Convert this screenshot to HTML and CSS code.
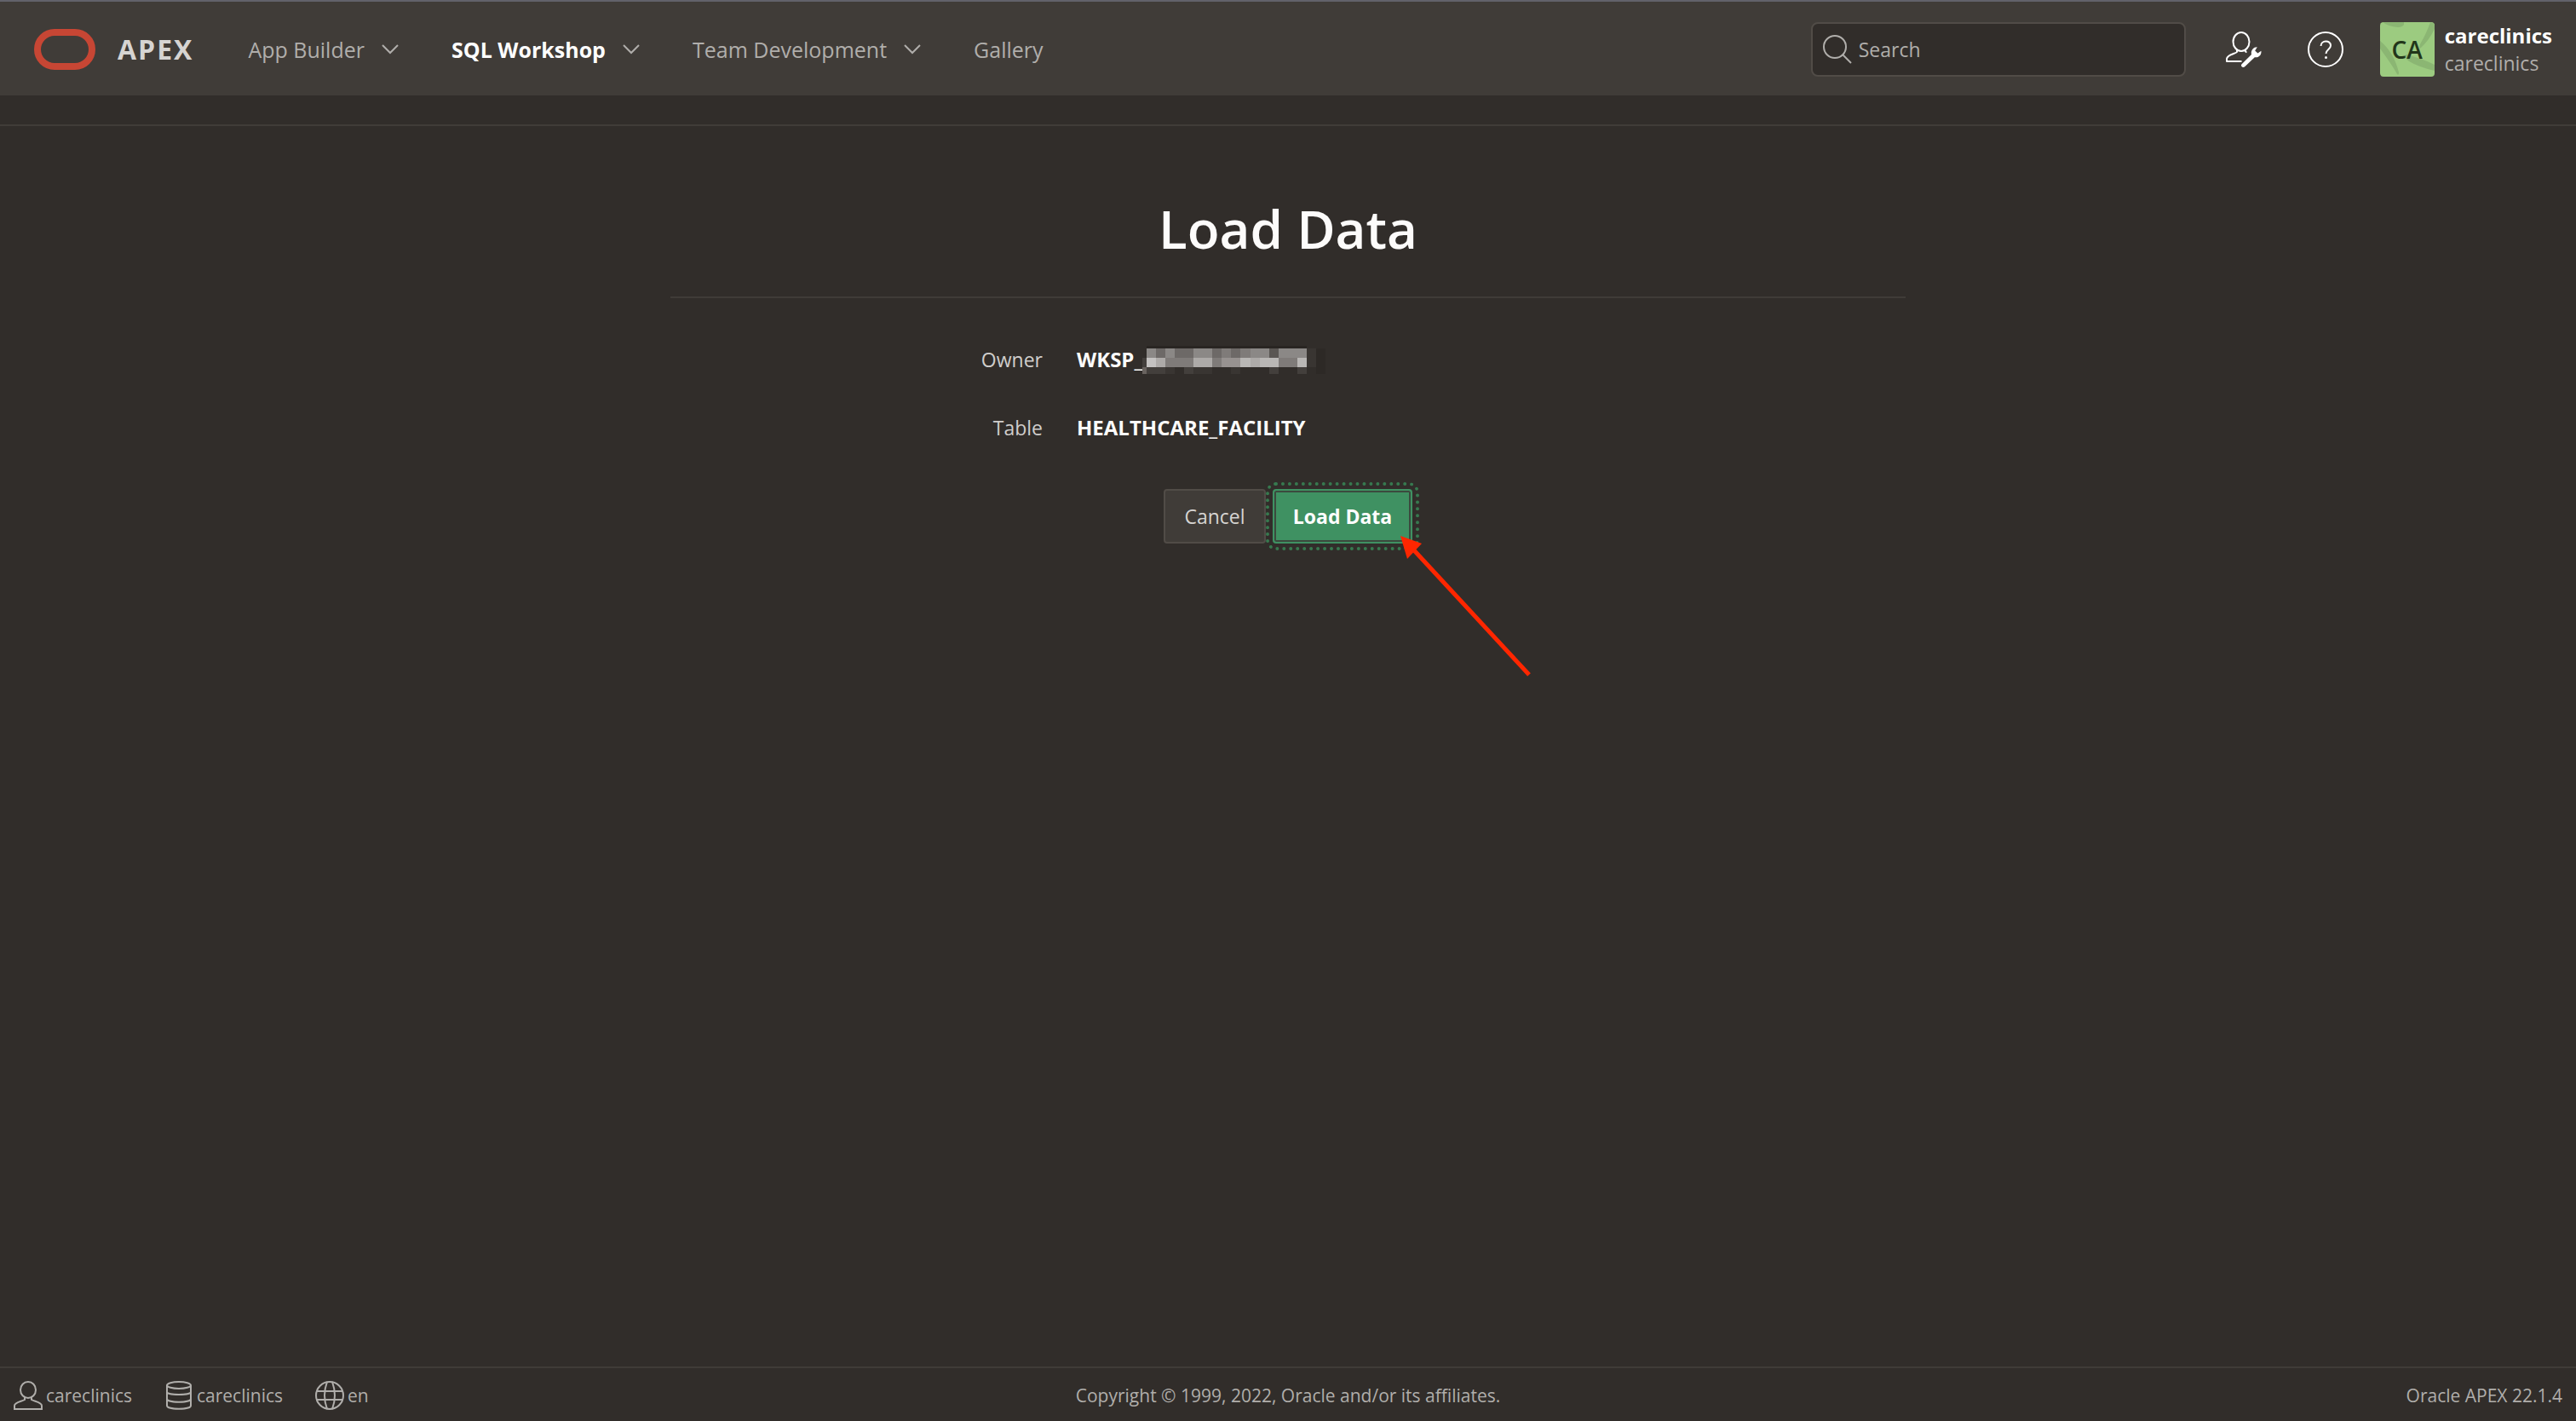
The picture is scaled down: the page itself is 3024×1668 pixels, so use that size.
FILE: index.html
```html
<!DOCTYPE html>
<html lang="en">
<head>
<meta charset="utf-8">
<meta name="viewport" content="width=device-width, initial-scale=1">
<title>Load Data</title>
<link rel="stylesheet" href="styles.css">
</head>
<body>
<header class="header">
  <a class="brand" href="#">
    <svg class="brand-logo" viewBox="0 0 72 48" aria-hidden="true"><rect x="4" y="4" width="64" height="40" rx="20" fill="none" stroke="#c74634" stroke-width="8"/></svg>
    <span class="brand-name">APEX</span>
  </a>
  <nav class="nav">
    <a class="nav-link" href="#">App Builder <svg class="chevron" viewBox="0 0 20 12" aria-hidden="true"><path d="M1 1l9 9 9-9"/></svg></a>
    <a class="nav-link nav-link-current" href="#">SQL Workshop <svg class="chevron" viewBox="0 0 20 12" aria-hidden="true"><path d="M1 1l9 9 9-9"/></svg></a>
    <a class="nav-link" href="#">Team Development <svg class="chevron" viewBox="0 0 20 12" aria-hidden="true"><path d="M1 1l9 9 9-9"/></svg></a>
    <a class="nav-link" href="#">Gallery</a>
  </nav>
  <div class="tools">
    <label class="search">
      <svg class="search-icon" viewBox="0 0 34 34" aria-hidden="true"><circle cx="14" cy="14" r="13"/><path d="M23 23l10 10"/></svg>
      <input class="search-input" type="search" placeholder="Search" aria-label="Search">
    </label>
    <button class="icon-button" type="button" aria-label="Administration">
      <svg class="tool-icon" viewBox="0 0 42 42" aria-hidden="true">
        <ellipse cx="18" cy="12" rx="9.500" ry="11"/>
        <path d="M13 21.500v2.500c-1.500 2-11.500 3-12 8v3h17.500"/>
        <path d="M23 21.500v2l1.500 1"/>
        <path class="wrench" d="M18.600 38.200L30 27c-1-4.500 2-9 6.800-8.800l-2.600 4.200 3.200 3 4-2.600c.8 5-3.400 8.400-7.600 7.400L22.200 41.200c-2.400 2-5.600-.6-3.600-3z"/>
      </svg>
    </button>
    <button class="icon-button" type="button" aria-label="Help">
      <svg class="tool-icon" viewBox="0 0 42 42" aria-hidden="true">
        <circle cx="21" cy="21" r="20"/>
        <path d="M15.500 17c0-7 11.500-7.500 11.500-.5 0 4.500-5.500 4.500-5.500 9.500"/>
        <circle class="dot" cx="21.500" cy="30.500" r="1.500"/>
      </svg>
    </button>
    <a class="account" href="#">
      <span class="avatar">
        <svg class="avatar-art" viewBox="0 0 64 64" aria-hidden="true"><path d="M3 0h25v3q-2 3-7 3Q9 5 3 0z"/><path d="M59 0l5 2v6q-7 14-17 23-2-2 1-7 6-10 11-24z"/><path d="M0 22q16 13 22 37 0 4-2 2Q14 50 0 31z"/><path d="M30 38q18 4 34 12v7q-18-4-30-11-6-5-4-8z"/></svg>
        <span class="avatar-initials">CA</span>
      </span>
      <span class="account-names"><strong class="account-user">careclinics</strong><span class="account-space">careclinics</span></span>
    </a>
  </div>
</header>
<div class="breadcrumb-bar"></div>
<main class="main">
  <section class="wizard">
    <h1 class="title">Load Data</h1>
    <dl class="details">
      <dt>Owner</dt>
      <dd>WKSP_<svg class="redacted" viewBox="0 0 216 34" shape-rendering="crispEdges" aria-label="hidden">
        <path fill="#292522" d="M5 0h188v3H5z"/>
        <path fill="#7f7b79" d="M5 3h188v22H5z"/>
        <path fill="#6d6967" d="M16 3h11v11H16zM38 3h22v11H38zM82 3h11v11H82zM104 3h11v11h-11z"/>
        <path fill="#5a5653" d="M149 3h11v11h-11z"/>
        <path fill="#8b8886" d="M5 3h11v11H5zM27 3h11v11H27zM60 3h22v11H60zM127 3h22v11h-22zM160 3h33v11h-33z"/>
        <path fill="#c4c2c1" d="M5 14h11v11H5z"/>
        <path fill="#adaaa8" d="M16 14h11v11H16zM60 14h22v11H60zM127 14h11v11h-11z"/>
        <path fill="#b9b7b5" d="M115 14h12v11h-12zM138 14h22v11h-22zM182 14h11v11h-11z"/>
        <path fill="#979290" d="M93 14h22v11H93z"/>
        <path fill="#69635f" d="M0 25h5v8H0z"/>
        <path fill="#433f3c" d="M0 14h5v11H0zM5 25h22v8H5zM49 25h11v8H49zM149 25h11v8h-11zM182 25h11v8h-11z"/>
        <path fill="#393532" d="M27 25h11v8H27zM60 25h22v8H60zM104 25h11v8h-11zM193 3h11v22h-11z"/>
        <path fill="#2d2926" d="M204 3h11v30h-11z"/>
      </svg></dd>
      <dt>Table</dt>
      <dd>HEALTHCARE_FACILITY</dd>
    </dl>
    <div class="actions">
      <button class="button" type="button">Cancel</button>
      <span class="pointed">
        <button class="button button-primary" type="button">Load Data</button>
        <svg class="arrow" viewBox="0 0 156 168" aria-hidden="true"><path d="M16 17L151 163" stroke="#ff2600" stroke-width="5"/><path d="M0 0l25 9-17 18z" fill="#ff2600"/></svg>
      </span>
    </div>
  </section>
</main>
<footer class="footer">
  <ul class="status">
    <li class="status-item"><svg class="status-icon" viewBox="0 0 34 34" aria-hidden="true"><ellipse cx="17" cy="10.500" rx="9" ry="9.500"/><path d="M13 19v3C10 24 1 25 1 29v4h32v-4c0-4-9-5-12-7v-3"/></svg>careclinics</li>
    <li class="status-item"><svg class="status-icon" viewBox="0 0 34 34" aria-hidden="true"><ellipse cx="17" cy="5" rx="14" ry="4"/><path d="M3 5v24c0 5 28 5 28 0V5M3 13c0 4 28 4 28 0M3 21c0 5 28 5 28 0"/></svg>careclinics</li>
    <li class="status-item"><svg class="status-icon" viewBox="0 0 34 34" aria-hidden="true"><circle cx="17" cy="17" r="16"/><path d="M2 12h30M2 22h30M14 1Q8 17 14 33M20 1Q26 17 20 33"/></svg>en</li>
  </ul>
  <p class="copyright">Copyright © 1999, 2022, Oracle and/or its affiliates.</p>
  <p class="version">Oracle APEX 22.1.4</p>
</footer>
</body>
</html>
```
FILE: styles.css
```css
* { box-sizing: border-box; }

body {
  margin: 0;
  min-height: 100vh;
  display: flex;
  flex-direction: column;
  background: #312d2a;
  color: #d0cecc;
  font: 23px/32px "Open Sans", "Noto Sans", sans-serif;
}

a { color: inherit; text-decoration: none; }
button { font: inherit; }
svg { fill: none; flex: none; }

.header {
  display: flex;
  align-items: center;
  height: 112px;
  padding: 2px 28px 0 40px;
  border-top: 2px solid #62626a;
  background: #403c38;
}

.brand { display: flex; align-items: center; gap: 26px; margin-right: 64px; }
.brand-logo { width: 72px; height: 48px; }
.brand-name { font-size: 32px; font-weight: 700; letter-spacing: 2px; color: #d6d4d2; }

.nav { display: flex; gap: 62px; font-size: 25px; color: #b0aeab; }
.nav-link { display: flex; align-items: center; gap: 20px; }
.nav-link-current { color: #fff; font-weight: 700; }
.chevron { width: 20px; height: 12px; stroke: #b0aeab; stroke-width: 2; }

.tools { display: flex; align-items: center; margin-left: auto; }
.search {
  display: flex;
  align-items: center;
  gap: 8px;
  width: 440px;
  height: 64px;
  margin-right: 36px;
  padding: 0 12px;
  border: 2px solid #514c47;
  border-radius: 8px;
  background: #312d2a;
}
.search-icon { width: 34px; height: 34px; stroke: #b0aeab; stroke-width: 2; }
.search-input {
  flex: 1;
  min-width: 0;
  padding: 0;
  border: 0;
  outline: 0;
  background: none;
  color: #fff;
  font: inherit;
}
.search-input::placeholder { color: #b0aeab; opacity: 1; }

.icon-button {
  display: flex;
  padding: 11px;
  margin-right: 32px;
  border: 0;
  background: none;
}
.tool-icon { width: 42px; height: 42px; stroke: #fff; stroke-width: 2; stroke-linejoin: round; }
.wrench, .dot { fill: #fff; stroke: none; }

.account { display: flex; align-items: center; gap: 12px; }
.avatar {
  display: grid;
  place-items: center;
  width: 64px;
  height: 64px;
  border-radius: 4px;
  overflow: hidden;
  background: #9ccb80;
}
.avatar-art { grid-area: 1 / 1; width: 64px; height: 64px; fill: #8bb673; }
.avatar-initials { grid-area: 1 / 1; color: #22361a; font-size: 28px; font-weight: 600; }
.account-names { display: flex; flex-direction: column; }
.account-user { color: #fff; font-size: 24px; }
.account-space { color: #b0aeab; }

.breadcrumb-bar { height: 36px; border-bottom: 2px solid #403c38; }

.main { flex: 1; padding: 80px 40px; }
.wizard { max-width: 1450px; margin: 0 auto; }
.title {
  margin: 0;
  padding-bottom: 40px;
  border-bottom: 2px solid #403c38;
  color: #fcfbfa;
  font-size: 62px;
  font-weight: 600;
  line-height: 80px;
  text-align: center;
}
.details {
  display: grid;
  grid-template-columns: 437px 1fr;
  gap: 48px 40px;
  margin: 0;
  padding: 56px 0;
}
.details dt { text-align: right; }
.details dd { display: flex; margin: 0; color: #fcfbfa; font-size: 24px; font-weight: 700; }
.redacted { width: 216px; height: 34px; margin-bottom: -2px; }

.actions { display: flex; justify-content: center; gap: 8px; }
.button {
  min-width: 120px;
  height: 64px;
  padding: 0 20px;
  border: 2px solid #514c47;
  border-radius: 4px;
  background: #403c38;
  color: #d6d4d2;
}
.button-primary {
  min-width: 164px;
  border-color: #3f9162;
  background: #3f9162;
  box-shadow: inset 0 0 0 2px #3b4a3e;
  color: #fff;
  font-weight: 700;
  outline: 4px dotted #37794f;
  outline-offset: 4px;
}
.pointed { position: relative; display: flex; }
.arrow { position: absolute; left: 150px; top: 55px; width: 156px; height: 168px; }

.footer {
  display: grid;
  grid-template-columns: 1fr auto 1fr;
  align-items: center;
  height: 64px;
  padding: 2px 16px 0;
  border-top: 2px solid #403c38;
  color: #b0aeab;
  font-size: 21px;
}
.status { display: flex; gap: 38px; margin: 0; padding: 0; list-style: none; }
.status-item { display: flex; align-items: center; gap: 4px; }
.status-icon { width: 34px; height: 34px; stroke: #b0aeab; stroke-width: 2; }
.copyright { margin: 0; }
.version { margin: 0; text-align: right; }
```
